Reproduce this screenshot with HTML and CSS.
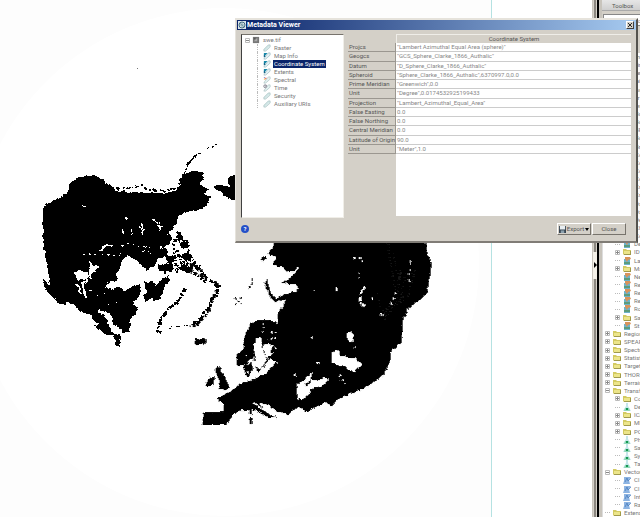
FILE: index.html
```
<!DOCTYPE html>
<html lang="en">
<head>
<meta charset="utf-8">
<title>Metadata Viewer</title>
<link rel="stylesheet" href="styles.css">
</head>
<body>
<svg class="defs" aria-hidden="true">
  <defs>
    <linearGradient id="tagfill" x1="0" y1="0" x2="1" y2="1"><stop offset="0" stop-color="#b9d8d8"/><stop offset="1" stop-color="#eef6f6"/></linearGradient>
  </defs>
  <symbol id="tag" viewBox="0 0 9 9"><path d="M1 6 6 1h2v2.500L3 8H1z" fill="url(#tagfill)" stroke="#a3bfbf" stroke-width=".7"/></symbol>
  <symbol id="tag-map" viewBox="0 0 9 9"><path d="M2 6 6 1h2v2.500L3 8H1z" fill="#e4f1f4" stroke="#92b4bd" stroke-width=".7"/><path d="M1 1h4L1 6z" fill="#1687a8"/><path d="M1 3 3 5 1 6z" fill="#125c83"/></symbol>
  <symbol id="tag-spectral" viewBox="0 0 9 9"><path d="M2 6 6 1h2v2.500L3 8H1z" fill="#e4f1f1" stroke="#a3bfbf" stroke-width=".7"/><path d="M1 1h1v1H1z" fill="#4562c4"/><path d="M2 2h2v1H2z" fill="#d44"/><path d="M1 3h2v1H1z" fill="#e9a93b"/></symbol>
  <symbol id="tag-time" viewBox="0 0 9 9"><path d="M2 6 6 1h2v2.500L3 8H1z" fill="#e4f1f1" stroke="#a3bfbf" stroke-width=".7"/><circle cx="2.500" cy="2.500" r="1.700" fill="#eee" stroke="#667" stroke-width=".7"/><path d="M2.500 1.500v1h1" fill="none" stroke="#445" stroke-width=".5"/></symbol>
  <symbol id="raster" viewBox="0 0 9 9"><path d="M1 1h7v7H1z" fill="#777"/><path d="M2 6 6 2v4z" fill="#aaa"/><path d="M2 2h3L2 4z" fill="#555"/></symbol>
  <symbol id="plus" viewBox="0 0 5 5"><path d="M.5.5h4v4h-4z" fill="#fff" stroke="#bbb"/><path d="M1 2h3v1H1zM2 1h1v3H2z" fill="#888"/></symbol>
  <symbol id="minus" viewBox="0 0 5 5"><path d="M.5.5h4v4h-4z" fill="#fff" stroke="#bbb"/><path d="M1 2h3v1H1z" fill="#888"/></symbol>
  <symbol id="folder" viewBox="0 0 8 8"><path d="M0 1h3l1 1h4v5H1L0 6z" fill="#d3ca62"/><path d="M1 3h6v3H1z" fill="#ece58a"/><path d="M1 7h7V3H7v3H1z" fill="#a09a4c"/></symbol>
  <symbol id="tool" viewBox="0 0 8 8"><path d="M1 2h6v6H1z" fill="#6db3cb"/><path d="M1 5h6v2H1z" fill="#5c9c7c"/><path d="M2 0h5l1 2-3 1-1 2-2-3z" fill="#d9935a"/></symbol>
  <symbol id="flask" viewBox="0 0 8 8"><path d="M3 0h2v3l3 5H0l3-5z" fill="#c4e5ea"/><path d="M2 5h4l1 3H1z" fill="#8fd8b6"/><path d="M3 5h2v2H3z" fill="#159653"/></symbol>
  <symbol id="vector" viewBox="0 0 8 8"><path d="M1 1h7L6 4l1 4H0l1-3z" fill="#8db4e2"/><path d="m2 6 2-4 1 3 3-3" fill="none" stroke="#4478ba" stroke-width=".7"/></symbol>
</svg>

<div class="app">
  <main class="view">
    <svg class="map" viewBox="0 0 491 517" preserveAspectRatio="xMinYMin slice" role="img" aria-label="Polar raster">
      <defs>
        <filter id="coast" x="0" y="0" width="100%" height="100%">
          <feTurbulence type="fractalNoise" baseFrequency=".22" numOctaves="3" seed="4"/>
          <feDisplacementMap in="SourceGraphic" scale="4" xChannelSelector="R" yChannelSelector="G"/>
        </filter>
      </defs>
      <rect width="491" height="517" fill="#fdfdfd"/>
      <circle cx="225" cy="262" r="254" fill="#fff"/>
      <path d="M137 68h1v1h-1z" fill="#777"/>
      <g filter="url(#coast)" shape-rendering="crispEdges">
        <!-- North America -->
        <g transform="translate(30 140) scale(.33333)">
          <path d="M145 110 200 108 232 130 255 152 300 156 350 158 400 162 440 150 452 135 448 118 465 103 490 92 522 98 518 118 508 132 520 145 540 146 520 160 540 172 528 200 515 207 480 212 445 228 440 250 425 270 400 290 390 310 385 350 378 372 350 390 335 375 318 360 295 348 275 362 270 385 258 400 262 420 235 426 228 440 245 449 265 440 280 452 310 440 330 432 332 455 325 478 310 482 312 495 328 500 318 520 302 535 299 575 280 577 262 560 240 548 230 525 205 510 225 530 240 555 243 575 268 582 274 590 266 622 255 608 252 586 230 582 212 570 190 555 205 553 180 525 150 515 135 495 115 488 90 495 70 475 45 450 38 415 60 438 55 400 45 340 38 290 38 200 75 178 115 158 117 132z"/>
          <path d="m398 288 18-8 12 14-10 20-18 8-12-10zM436 276l18 4 8 16-16 6zM382 330l20-8 12 14-14 16-20 4zM405 345l26 4 2 18-22 2zM384 372l20 2 22-6 8 18-20 8-28-2zM450 310l26-4 4 12-26 10zM448 348l28-12 14 16-20 10zM442 380l20-8 28 14-18 14zM340 420l12 8 14-6 10 16 20-18 16-12 8 12-18 24-10 32-20 8-8-10-18 12-6-20 12-10z"/>
          <path d="M615 105 598 110 594 130 600 142 560 132 553 145 575 158 600 178 615 180z"/>
          <g fill="none" stroke="#000">
            <path d="M450 130 464 98 480 65 510 38" stroke-width="6" stroke-dasharray="34 3 12 5"/>
            <path d="M518 30 568 10" stroke-width="3" stroke-dasharray="5 9"/>
            <path d="m250 146 50-3 32-6 24 13 50 3 38-10" stroke-width="7" stroke-dasharray="6 5 11 6"/>
            <path d="M416 300 470 306 480 350 500 380 530 415 565 442M440 330l20 60 40 14 28 22M402 394l50-6 10-20 50 16" stroke-width="9" stroke-dasharray="6 6 13 7 3 5"/>
            <path d="M430 312l14 92M466 300l22 92" stroke-width="7" stroke-dasharray="4 5 9 6"/>
            <path d="M468 446 440 488 424 500 408 512 390 540 382 574 395 578" stroke-width="8" stroke-dasharray="16 3 7 5"/>
            <path d="M566 434 562 462 546 478 540 500 520 524 505 548 488 548" stroke-width="9" stroke-dasharray="8 5 15 4"/>
            <path d="M415 562 500 552" stroke-width="3" stroke-dasharray="10 14"/>
          </g>
          <g fill="none" stroke="#fff" stroke-width="6">
            <path d="M212 332 228 315 250 320M175 362l14 18 12 4-16 8-2 22M134 400l18-7 18 6 0 24-12 10 4 24 8 18M136 432l12 8 4 26"/>
            <path d="M205 512 225 518 240 532 243 560 275 578" stroke-width="12"/>
            <path d="M156 197h12M338 250v36M326 262l20 8M388 243v30M378 258h20M370 240l26 28M278 265v20M304 266v20M288 232v6" stroke-width="4"/>
            <path d="M260 320l40-10 60 14M250 350l32-12M160 345l44-3M215 345h28M340 330l40 14" stroke-width="3" stroke-dasharray="4 12 8 9"/>
            <path d="M180 450l30 20 30-20 30 30M210 500l70-20" stroke-width="3" stroke-dasharray="3 22"/>
          </g>
          <path d="M176 364l8 4 8 16 8 2-4 10-8 0-2 18-10 4 2-20zM134 396l30-4 8 12-6 16-12-4-10 8-6-12z" fill="#fff"/>
        </g>
        <!-- Europe and Asia -->
        <g transform="translate(190 240) scale(.33333)">
          <path d="M258-6H706L712 40 726 70 718 120 712 155 690 178 655 205 640 235 634 305 602 338 600 365 580 405 530 440 480 462 440 480 425 500 408 485 390 495 350 515 325 500 295 522 265 515 235 495 205 487 225 512 262 533 235 530 190 508 150 510 130 525 108 555 35 555 40 515 100 515 103 490 80 475 120 455 150 430 190 420 230 398 260 368 232 354 265 325 262 225 275 205 290 178 270 185 250 180 236 152 258 176 300 156 325 150 320 132 275 130 302 112 325 90 290 96 278 80 250 75 258 50 232 42 248 22z"/>
          <path d="M165 285 180 255 200 240 255 242 268 262 274 330 240 340 250 315 222 310 218 325 228 348 236 362 215 385 208 400 190 372 192 352 206 338 202 300 190 315 194 346 180 360 170 374 142 378 138 345 158 330z"/>
          <path d="m162 378 22-10 8 18-16 24-12-6zM48 426l14-16 12 0-4 26-18 4zM76 384l14-4 4 20 12 14 12 26-12 10-22-4 8-16-10-20zM14 293l10 4 18-5 8 12-10 10-22-3zM180 508h6v16h-6zM178 534h9v18h-9z"/>
          <path d="M212 62l10-14 8 4-10 12z"/>
          <g fill="none" stroke="#000">
            <path d="M228 122 238 158 256 182 276 178" stroke-width="8"/>
            <path d="M0 70 30 90 46 120M0 92l44 20M60 122l24 12M78 150 62 195 46 226 20 258 0 258" stroke-width="8" stroke-dasharray="8 5 14 5"/>
            <path d="m134 174 20 18M154 170l-20 28M188 116l-10 28" stroke-width="4" stroke-dasharray="7 5"/>
          </g>
          <g fill="#fff">
            <path d="M427 333 443 330 450 346 498 356 515 372 495 398 465 378 425 370zM320 432 345 420 368 393 364 422 415 412 410 430 365 448 350 474 320 480zM472 277l12-3 9 20-10 14-14-12zM196 294h16l4 30 14 30-8 22-14 12-18-16 12-40z"/>
            <path d="M342 432l18-10 2 7-16 8z" fill="#000"/>
          </g>
          <g fill="none" stroke="#fff">
            <path d="M526 138 514 156 510 182 522 198M548 170v14" stroke-width="7" stroke-dasharray="14 4"/>
            <path d="M490 55h26v10M508 95v25M440 145v10M324 82v8M664 64v10M658 86v50M618 158l-16 40M570 222h8M496 318v5M364 290l8 14M384 366v8M446 404l20 28M318 402v6M370 152h5" stroke-width="5" stroke-dasharray="7 9"/>
            <path d="M232 300l30-8M244 318l16 8M220 250v28M242 275l20 4M164 350h14M160 392l30 10" stroke-width="4" stroke-dasharray="6 5"/>
            <path d="M190 488l30 20 34 20" stroke-width="5"/>
          </g>
          <g fill="none" stroke="#242424" stroke-width="3" stroke-dasharray="3 7">
            <path d="M595 10 600 60 612 120 618 160M630 90l-6 90-40 60M650 100l-20 80-50 30M675 80l-20 90-90 60M610 40l30 130M560 160l30 80"/>
          </g>
        </g>
      </g>
    </svg>
    <div class="guide"></div>
  </main>

  <div class="splitter"><button class="grip" type="button" aria-label="Collapse toolbox"><svg viewBox="0 0 4 6"><path d="M1 0v6l3-3z"/></svg></button></div>

  <aside class="toolbox">
    <h2 class="toolbox-title">Toolbox</h2>
    <div class="search"><input type="text" aria-label="Search" value="Search the toolbox"></div>
    <ul class="tools">
      <li>Geometric</li>
      <li>Filtering</li>
      <li>Image Fil</li>
      <li>Mosaicking</li>
      <li>Radiometric</li>
      <li>Radar Tools</li>
      <li>Raster</li>
      <li class="sub">Bu</li>
      <li class="sub">Bo</li>
      <li class="sub">BR</li>
      <li class="sub">Bo</li>
      <li class="sub">Br</li>
      <li class="sub">Co</li>
      <li class="sub">Co</li>
      <li class="sub">Co</li>
      <li class="sub">Co</li>
      <li class="sub">Cr</li>
      <li class="sub">Cr</li>
      <li class="sub">Da</li>
      <li class="sub">Da</li>
      <li class="sub">De</li>
      <li class="sub">Ch</li>
      <li class="sub">Co</li>
      <li class="sub"><i></i><svg><use href="#tool"/></svg>De</li>
      <li class="sub"><svg class="x"><use href="#plus"/></svg><svg><use href="#folder"/></svg>ID</li>
      <li class="sub"><i></i><svg><use href="#tool"/></svg>La</li>
      <li class="sub"><svg class="x"><use href="#plus"/></svg><svg><use href="#folder"/></svg>Ma</li>
      <li class="sub"><i></i><svg><use href="#tool"/></svg>Ne</li>
      <li class="sub"><i></i><svg><use href="#tool"/></svg>Re</li>
      <li class="sub"><i></i><svg><use href="#tool"/></svg>Re</li>
      <li class="sub"><i></i><svg><use href="#tool"/></svg>Re</li>
      <li class="sub"><i></i><svg><use href="#tool"/></svg>Ro</li>
      <li class="sub"><svg class="x"><use href="#plus"/></svg><svg><use href="#folder"/></svg>Sa</li>
      <li class="sub"><i></i><svg><use href="#tool"/></svg>St</li>
      <li><svg class="x"><use href="#plus"/></svg><svg><use href="#folder"/></svg>Region</li>
      <li><svg class="x"><use href="#plus"/></svg><svg><use href="#folder"/></svg>SPEAR</li>
      <li><svg class="x"><use href="#plus"/></svg><svg><use href="#folder"/></svg>Spectral</li>
      <li><svg class="x"><use href="#plus"/></svg><svg><use href="#folder"/></svg>Statistics</li>
      <li><svg class="x"><use href="#plus"/></svg><svg><use href="#folder"/></svg>Target</li>
      <li><svg class="x"><use href="#plus"/></svg><svg><use href="#folder"/></svg>THOR</li>
      <li><svg class="x"><use href="#plus"/></svg><svg><use href="#folder"/></svg>Terrain</li>
      <li><svg class="x"><use href="#minus"/></svg><svg><use href="#folder"/></svg>Transform</li>
      <li class="sub"><svg class="x"><use href="#plus"/></svg><svg><use href="#folder"/></svg>Co</li>
      <li class="sub"><i></i><svg><use href="#flask"/></svg>De</li>
      <li class="sub"><svg class="x"><use href="#plus"/></svg><svg><use href="#folder"/></svg>ICA</li>
      <li class="sub"><svg class="x"><use href="#plus"/></svg><svg><use href="#folder"/></svg>MN</li>
      <li class="sub"><svg class="x"><use href="#plus"/></svg><svg><use href="#folder"/></svg>PC</li>
      <li class="sub"><i></i><svg><use href="#flask"/></svg>Ph</li>
      <li class="sub"><i></i><svg><use href="#flask"/></svg>Sa</li>
      <li class="sub"><i></i><svg><use href="#flask"/></svg>Sy</li>
      <li class="sub"><i></i><svg><use href="#flask"/></svg>Ta</li>
      <li><svg class="x"><use href="#minus"/></svg><svg><use href="#folder"/></svg>Vector</li>
      <li class="sub"><i></i><svg><use href="#vector"/></svg>Cl</li>
      <li class="sub"><i></i><svg><use href="#vector"/></svg>Cl</li>
      <li class="sub"><i></i><svg><use href="#vector"/></svg>Int</li>
      <li class="sub"><i></i><svg><use href="#vector"/></svg>Ra</li>
      <li><i></i><svg><use href="#folder"/></svg>Extensions</li>
    </ul>
  </aside>
</div>

<section class="dialog" role="dialog" aria-labelledby="dialog-title">
  <header class="titlebar">
    <svg class="logo" viewBox="0 0 8 8"><path d="M0 0h8v8H0z" fill="#dce6ea"/><circle cx="4" cy="4" r="3" fill="none" stroke="#456d82"/><path d="M1 4h6M4 1v6M2 2l4 4" stroke="#6c929f" stroke-width=".7"/></svg>
    <h1 id="dialog-title">Metadata Viewer</h1>
    <button class="close-x" type="button" aria-label="Close window"><svg viewBox="0 0 5 5"><path d="m0 0 5 5M5 0 0 5" stroke="#000"/></svg></button>
  </header>
  <div class="content">
    <ul class="tree">
      <li class="root"><svg class="x"><use href="#minus"/></svg><svg><use href="#raster"/></svg><span>swe.tif</span></li>
      <li><svg><use href="#tag"/></svg><span>Raster</span></li>
      <li><svg><use href="#tag-map"/></svg><span>Map Info</span></li>
      <li><svg><use href="#tag-map"/></svg><span class="selected">Coordinate System</span></li>
      <li><svg><use href="#tag-map"/></svg><span>Extents</span></li>
      <li><svg><use href="#tag-spectral"/></svg><span>Spectral</span></li>
      <li><svg><use href="#tag-time"/></svg><span>Time</span></li>
      <li><svg><use href="#tag"/></svg><span>Security</span></li>
      <li><svg><use href="#tag"/></svg><span>Auxiliary URIs</span></li>
    </ul>
    <div class="grid-panel">
      <table>
        <thead><tr><td></td><th scope="col">Coordinate System</th></tr></thead>
        <tbody>
          <tr><th scope="row">Projcs</th><td>"Lambert Azimuthal Equal Area (sphere)"</td></tr>
          <tr><th scope="row">Geogcs</th><td>"GCS_Sphere_Clarke_1866_Authalic"</td></tr>
          <tr><th scope="row">Datum</th><td>"D_Sphere_Clarke_1866_Authalic"</td></tr>
          <tr><th scope="row">Spheroid</th><td>"Sphere_Clarke_1866_Authalic",6370997.0,0.0</td></tr>
          <tr><th scope="row">Prime Meridian</th><td>"Greenwich",0.0</td></tr>
          <tr><th scope="row">Unit</th><td>"Degree",0.0174532925199433</td></tr>
          <tr><th scope="row">Projection</th><td>"Lambert_Azimuthal_Equal_Area"</td></tr>
          <tr><th scope="row">False Easting</th><td>0.0</td></tr>
          <tr><th scope="row">False Northing</th><td>0.0</td></tr>
          <tr><th scope="row">Central Meridian</th><td>0.0</td></tr>
          <tr><th scope="row">Latitude of Origin</th><td>90.0</td></tr>
          <tr><th scope="row">Unit</th><td>"Meter",1.0</td></tr>
        </tbody>
      </table>
      <div class="blank"></div>
    </div>
  </div>
  <footer class="actions">
    <button class="help" type="button" aria-label="Help">?</button>
    <button class="btn" type="button"><svg viewBox="0 0 8 8"><path d="M0 0h8v8H0z" fill="#35424f"/><path d="M1 0h6v4H1z" fill="#e8eef2"/><path d="M2 5h4v3H2z" fill="#8ba0ae"/></svg>Export<svg class="caret" viewBox="0 0 4 3"><path d="M0 0h4L2 3z"/></svg></button>
    <button class="btn" type="button">Close</button>
  </footer>
</section>
</body>
</html>
```

FILE: styles.css
```
* { box-sizing: border-box; }

body {
  margin: 0;
  height: 100vh;
  overflow: hidden;
  background: #fff;
  color: #555;
  font: 6px/8px Roboto, "Liberation Sans", sans-serif;
}

h1, h2, ul { margin: 0; padding: 0; font-size: 6px; }
ul { list-style: none; }
button, input { font: inherit; color: inherit; border-radius: 0; }
button { padding: 0; }
svg { display: block; flex: none; }
.defs { position: absolute; width: 0; height: 0; }

.app { display: flex; height: 100%; }

.view { display: flex; flex: 1; min-width: 0; }
.map { flex: 83; min-width: 0; height: 100%; }
.guide { flex: 17; border-left: 1px solid #b5e2e2; }

.splitter {
  display: flex;
  flex: none;
  flex-direction: column;
  justify-content: center;
  width: 10px;
  border: solid #c8c4bc;
  border-width: 0 3px 0 1px;
  background: linear-gradient(90deg, #d4d0c8 1px, #8b8780 1px 3px, #d4d0c8 3px 4px, #000 4px);
}
.grip {
  display: grid;
  place-items: center;
  width: 4px;
  height: 27px;
  margin-top: 13px;
  border: 0;
  background: #f3f0e8;
}
.grip svg { width: 4px; height: 6px; }

.toolbox {
  display: flex;
  flex: none;
  flex-direction: column;
  width: 38px;
  overflow: hidden;
  background: #fff;
}
.toolbox-title {
  height: 11px;
  padding-left: 10px;
  border-bottom: 1px solid #aaa;
  background: linear-gradient(#e6e6e6, #cfcfcf);
  font-weight: normal;
  line-height: 11px;
}
.search { height: 42px; padding: 3px 0 0 1px; background: #d4d0c8; }
.search input {
  display: block;
  width: 60px;
  height: 12px;
  padding: 0 2px;
  border: 1px solid #888;
  background: #fff;
  color: #888;
}
.tools {
  display: grid;
  flex: 1;
  grid-auto-rows: 1fr;
  border-left: 1px solid #ddd;
  color: #777;
}
.tools li {
  display: flex;
  align-items: center;
  gap: 3px;
  padding-left: 2px;
  white-space: nowrap;
}
.tools .sub { padding-left: 12px; }
.tools li:nth-child(-n+7) { padding-left: 21px; }
.tools .sub:nth-child(-n+23) { padding-left: 32px; }
.tools svg { width: 8px; height: 8px; }
.tools .x { width: 5px; height: 5px; }
.tools i { width: 5px; border-top: 1px dotted #bbb; }

.dialog {
  position: absolute;
  top: 18px;
  right: 2px;
  left: 235px;
  border: solid;
  border-width: 2px 2px 2px 1px;
  border-color: #e6e3dc #55534e #807c76 #e6e3dc;
  background: #d4d0c8;
}

.titlebar {
  display: flex;
  align-items: center;
  gap: 1px;
  height: 10px;
  margin-left: 1px;
  padding: 0 2px 0 1px;
  background: linear-gradient(90deg, #0a246a, #a6caf0);
  color: #fff;
}
.titlebar h1 { flex: 1; font-size: 7px; }
.logo { width: 8px; height: 8px; }
.close-x {
  display: grid;
  place-items: center;
  width: 8px;
  height: 8px;
  border: 1px solid;
  border-color: #fff #404040 #404040 #fff;
  background: #d4d0c8;
}
.close-x svg { width: 4px; height: 4px; }

.content { display: flex; gap: 4px; padding: 4px 5px 0 5px; }

.tree {
  display: grid;
  grid-auto-rows: 8px;
  flex: none;
  width: 103px;
  height: 184px;
  padding-top: 1px;
  border: 1px solid;
  border-color: #77736c #f0eee8 #f0eee8 #404040;
  background: #fff;
  color: #777;
}
.tree li {
  display: flex;
  align-items: center;
  gap: 2px;
  margin-left: 15px;
  padding-left: 5px;
  border-left: 1px dotted #bbb;
  white-space: nowrap;
}
.tree .root { margin-left: 3px; padding-left: 0; border: 0; }
.tree svg { width: 8px; height: 8px; }
.tree .x { width: 5px; height: 5px; }
.tree span { padding: 0 1px; }
.tree .selected { background: #0a246a; color: #fff; }

.grid-panel { display: flex; flex: 1; flex-direction: column; height: 182px; }
table { width: 100%; height: 120px; border-collapse: separate; border-spacing: 0; table-layout: fixed; }
th, td { height: 9px; padding: 0 1px; font-weight: normal; line-height: 8px; white-space: nowrap; }
thead td { width: 48px; }
thead th { border: solid #efede8; border-width: 1px 0 0 1px; text-align: center; }
tbody th {
  border: solid #9b9790;
  border-width: 0 1px 1px 0;
  text-align: left;
}
tbody td { border-bottom: 1px solid #ccc; background: #fff; color: #888; }
.blank { flex: 1; margin-left: 48px; background: #fff; }

.actions { display: flex; align-items: center; gap: 1px; padding: 5px 10px 6px 5px; }
.help {
  width: 8px;
  height: 8px;
  margin-right: auto;
  border: 0;
  border-radius: 50%;
  background: #2450c8;
  color: #fff;
  font-weight: bold;
}
.btn {
  display: flex;
  align-items: center;
  justify-content: center;
  gap: 1px;
  width: 34px;
  height: 12px;
  border: 1px solid;
  border-color: #fff #77736c #77736c #fff;
  background: #d4d0c8;
}
.btn svg { width: 7px; height: 7px; }
.btn .caret { width: 4px; height: 3px; }
```
